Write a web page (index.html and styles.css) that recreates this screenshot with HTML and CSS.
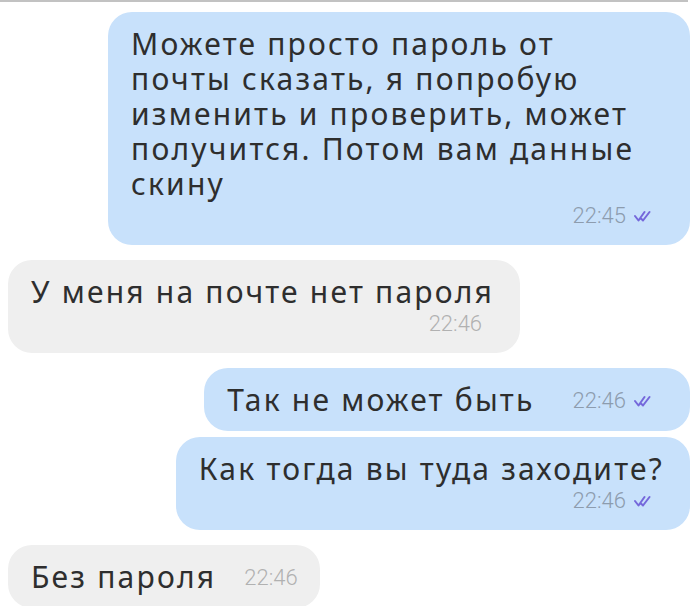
FILE: index.html
```html
<!DOCTYPE html>
<html>
<head>
    <meta charset="utf-8" />
    <title>Чат</title>
    <link rel="stylesheet" href="styles.css">
</head>
<body>
<div class="topLine"></div>
<div class="chat">
    <div class="msg out wide">
        <div class="msgText">Можете просто пароль от почты сказать, я попробую изменить и проверить, может получится. Потом вам данные скину</div>
        <div class="meta"><span class="time">22:45</span><svg class="ticks" viewBox="0 0 18 12"><path d="M1 6 L4.5 10.5 L10.5 2 M7.5 9 L9 10.5 L15.5 2"/></svg></div>
    </div>
    <div class="msg in">
        <div class="msgText">У меня на почте нет пароля</div>
        <div class="meta"><span class="time">22:46</span></div>
    </div>
    <div class="msg out inline">
        <div class="msgText">Так не может быть</div>
        <div class="meta"><span class="time">22:46</span><svg class="ticks" viewBox="0 0 18 12"><path d="M1 6 L4.5 10.5 L10.5 2 M7.5 9 L9 10.5 L15.5 2"/></svg></div>
    </div>
    <div class="msg out cont">
        <div class="msgText">Как тогда вы туда заходите?</div>
        <div class="meta"><span class="time">22:46</span><svg class="ticks" viewBox="0 0 18 12"><path d="M1 6 L4.5 10.5 L10.5 2 M7.5 9 L9 10.5 L15.5 2"/></svg></div>
    </div>
    <div class="msg in inline">
        <div class="msgText">Без пароля</div>
        <div class="meta"><span class="time">22:46</span></div>
    </div>
</div>
</body>
</html>
```
FILE: styles.css
```css
body {
    margin: 0; background-color: #fff;
    font-family: "Noto Sans", "DejaVu Sans", sans-serif; color: #2e2e2e;
}
.topLine {
    height: 2px; width: 688px; background-color: #c2c2c2;
}
.chat {
    display: flex; flex-direction: column; gap: 15px;
    padding: 10px 10px 0 8px;
}
.msg {
    max-width: 533px;
    padding: 14px 26px 14px 23px;
    border-radius: 24px;
    font-size: 30px; line-height: 35px; letter-spacing: 2.2px;
}
.wide {
    width: 533px;
}
.wide .msgText {
    max-width: 512px;
}
.out {
    align-self: flex-end; background-color: #c8e1fb;
}
.in {
    align-self: flex-start; background-color: #efefef;
}
.cont {
    margin-top: -9px;
}
.meta {
    display: flex; justify-content: flex-end; align-items: center; gap: 8px;
    margin-right: 12px; line-height: 30px;
}
.time {
    font-family: Roboto, "Liberation Sans", sans-serif; font-weight: 300;
    font-size: 22px; letter-spacing: 0; color: #8d9cae;
}
.in .time {
    color: #b1b1b1;
}
.ticks {
    width: 18px; height: 12px;
    fill: none; stroke: #7568db; stroke-width: 2; stroke-linecap: round; stroke-linejoin: round;
}
.inline {
    display: flex; align-items: center; gap: 38px;
}
.in.inline {
    gap: 28px; padding-right: 22px;
}
.in.inline .meta {
    margin-right: 0;
}
.inline .meta {
    margin-top: 3px;
}
```
